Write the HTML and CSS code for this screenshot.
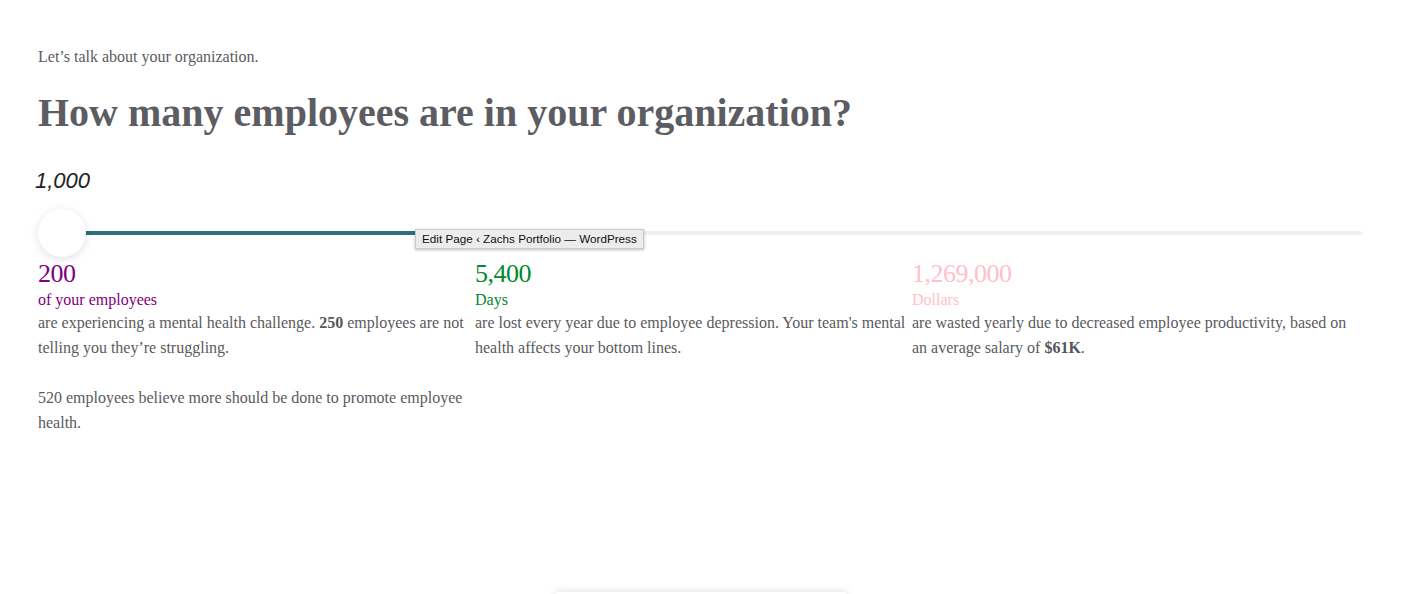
FILE: index.html
```html
<!DOCTYPE html>
<html lang="en">
<head>
<meta charset="utf-8">
<title>Edit Page ‹ Zachs Portfolio — WordPress</title>
<link rel="stylesheet" href="styles.css">
</head>
<body>
<main class="page">
  <p class="intro">Let’s talk about your organization.</p>
  <h1 class="question">How many employees are in your organization?</h1>
  <div class="value">1,000</div>
  <div class="slider">
    <div class="track"><div class="fill" style="width:32%"></div></div>
    <div class="thumb"></div>
    <div class="tooltip">Edit Page ‹ Zachs Portfolio — WordPress</div>
  </div>
  <section class="stats">
    <div class="stat">
      <div class="num purple">200</div>
      <div class="unit purple">of your employees</div>
      <p class="desc">are experiencing a mental health challenge. <b>250</b> employees are not telling you they’re struggling.</p>
      <p class="desc">520 employees believe more should be done to promote employee health.</p>
    </div>
    <div class="stat">
      <div class="num green">5,400</div>
      <div class="unit green">Days</div>
      <p class="desc">are lost every year due to employee depression. Your team's mental health affects your bottom lines.</p>
    </div>
    <div class="stat">
      <div class="num pink">1,269,000</div>
      <div class="unit pink">Dollars</div>
      <p class="desc">are wasted yearly due to decreased employee productivity, based on an average salary of <b>$61K</b>.</p>
    </div>
  </section>
  <div class="next-card"></div>
</main>
</body>
</html>
```
FILE: styles.css
```css
html, body {
  margin: 0;
  padding: 0;
  background: #ffffff;
  overflow: hidden;
}
body {
  font-family: "Liberation Serif", "Times New Roman", serif;
  color: #5a5a60;
}
.page {
  width: 1324px;
  padding: 47px 0 0 38px;
  height: 547px;
  position: relative;
}
.intro {
  margin: 0;
  font-size: 16px;
  line-height: 20px;
}
.question {
  margin: 22px 0 0 0;
  font-size: 40px;
  line-height: 48px;
  font-weight: bold;
  color: #5c5c63;
}
.value {
  margin: 32px 0 0 -3px;
  font-family: "Liberation Sans", Arial, sans-serif;
  font-style: italic;
  font-size: 22px;
  line-height: 24px;
  color: #222222;
}
.slider {
  position: relative;
  height: 52px;
  margin-top: 12px;
}
.track {
  position: absolute;
  left: 24px;
  right: 0;
  top: 26px;
  height: 4px;
  border-radius: 2px;
  background: #eef0f3;
}
.fill {
  height: 100%;
  background: #2d6f7f;
}
.thumb {
  position: absolute;
  left: 0;
  top: 4px;
  width: 48px;
  height: 48px;
  border-radius: 50%;
  background: #ffffff;
  box-shadow: 0 2px 10px rgba(0,0,0,0.12);
}
.tooltip {
  position: absolute;
  left: 377px;
  top: 24px;
  height: 18px;
  padding: 0 6px 0 6px;
  background: #ececec;
  border: 1px solid #c9c9c9;
  box-shadow: 0 1px 3px rgba(0,0,0,0.25);
  font-family: "Liberation Sans", Arial, sans-serif;
  font-size: 11.7px;
  line-height: 18px;
  color: #111111;
  white-space: nowrap;
  z-index: 2;
}
.stats {
  display: grid;
  grid-template-columns: 437px 437px 437px;
  margin-top: 1px;
}
.num {
  font-size: 26px;
  line-height: 31px;
  letter-spacing: -0.5px;
}
.unit {
  font-size: 16px;
  line-height: 21px;
}
.purple { color: #800080; }
.green { color: #008a2b; }
.pink { color: #ffc0cb; }
.desc {
  margin: 0 0 25px 0;
  font-size: 16px;
  line-height: 25px;
  color: #5a5a60;
}
.desc b { color: #55555b; }
.next-card {
  position: absolute;
  left: 556px;
  top: 592px;
  width: 290px;
  height: 40px;
  background: #fff;
  box-shadow: 0 0 8px rgba(0,0,0,0.15);
}
```
